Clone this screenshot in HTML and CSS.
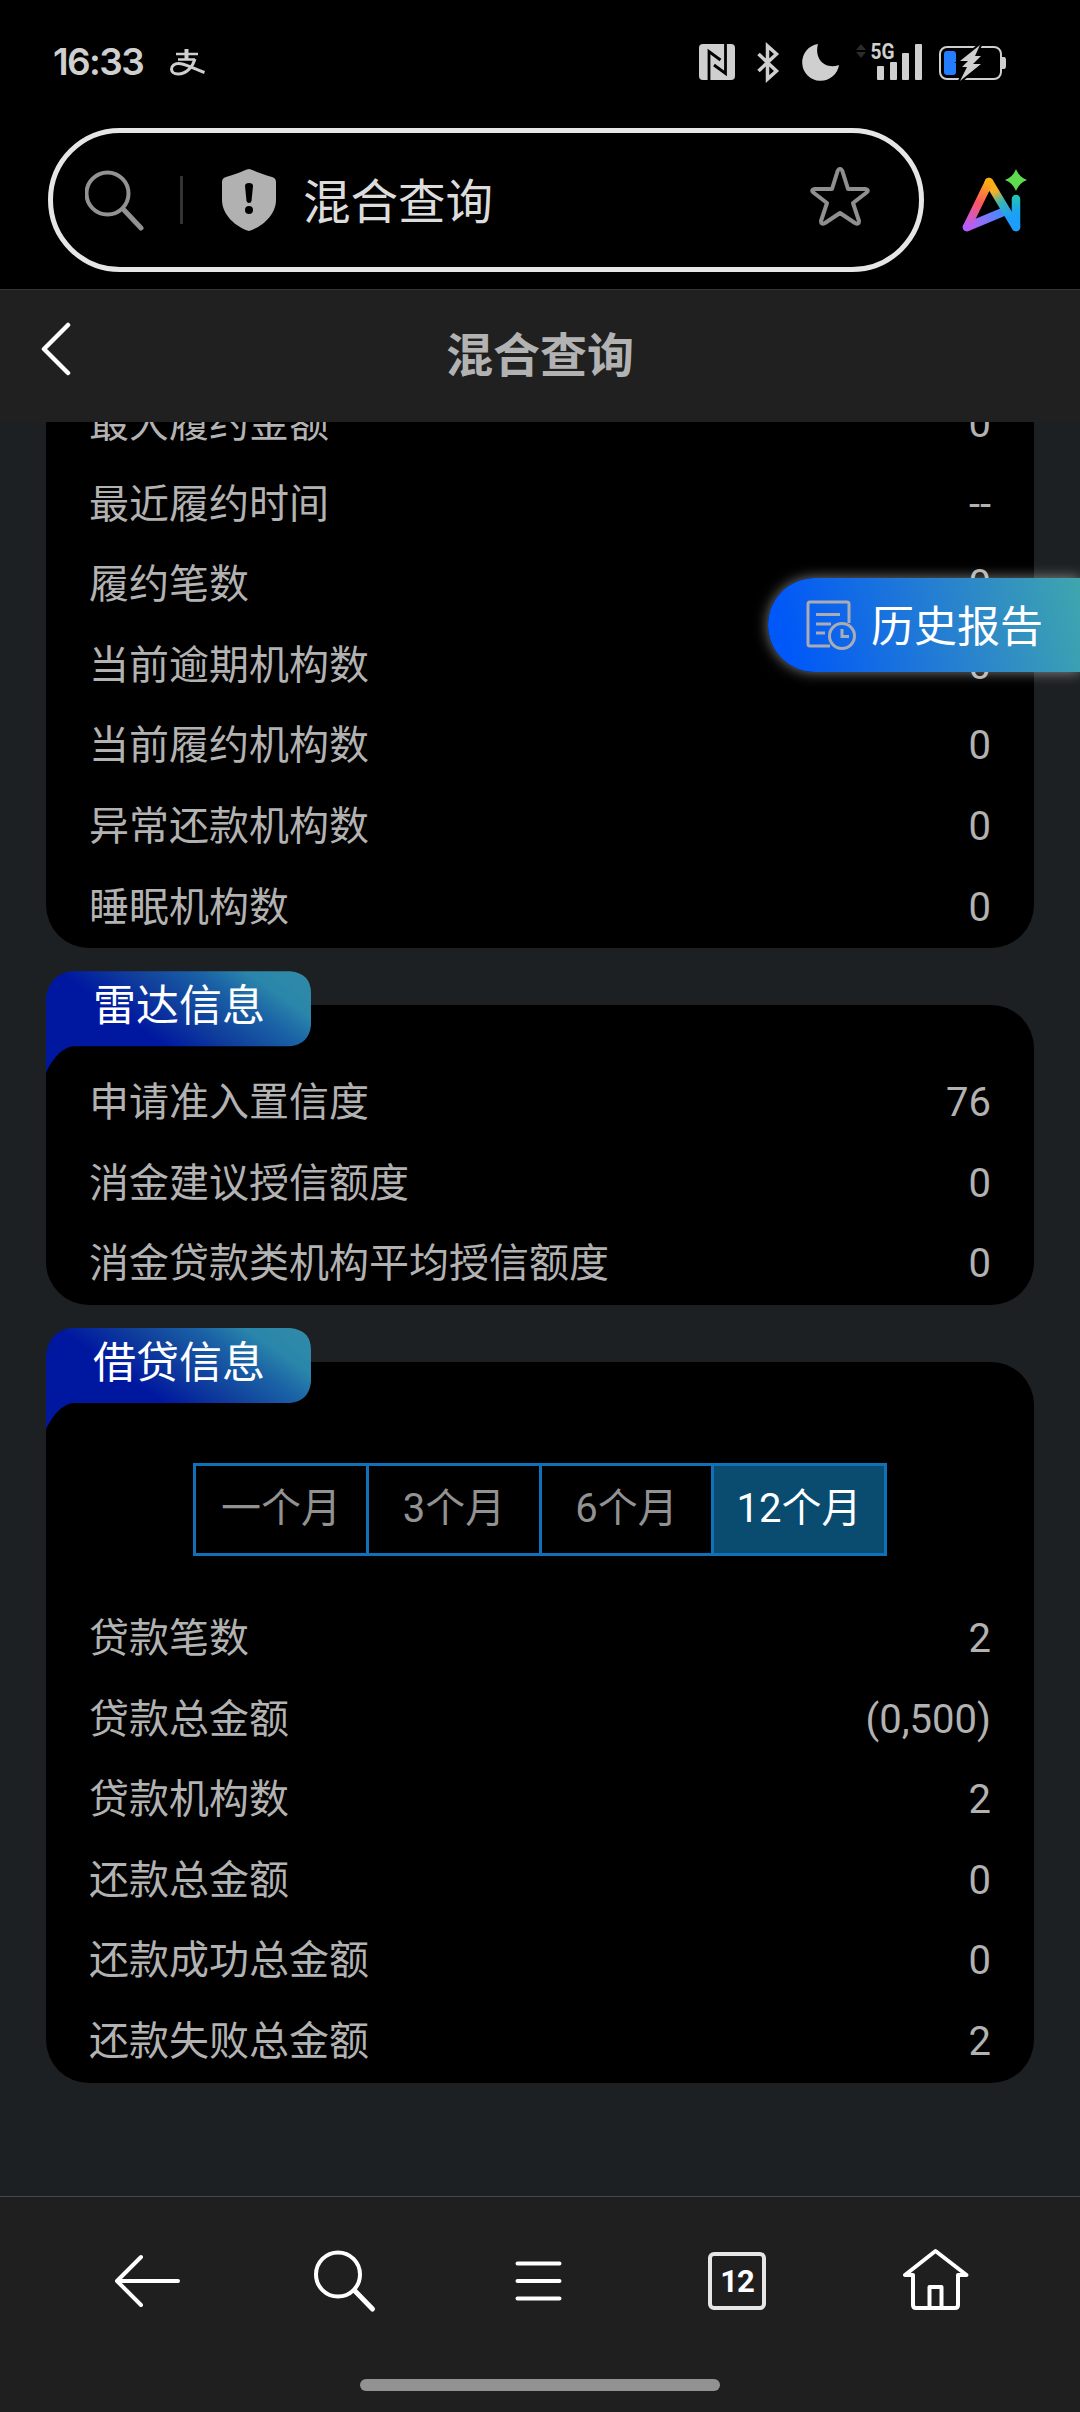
FILE: index.html
```html
<!DOCTYPE html>
<html lang="zh-CN">
  <head>
    <meta charset="UTF-8">
    <link rel="stylesheet" href="styles.css">
    <title>混合查询</title>
  </head>
  <body>
    <div class="phone">
      <div class="status">
        <span class="time">16:33</span>
        <svg class="pay" width="36" height="28" viewBox="0 0 36 28" fill="none" stroke="#cfcfcf">
          <path d="M6 6h22M8 11.500h17" stroke-width="2.400"/>
          <path d="M16.500 1v10" stroke-width="4"/>
          <path d="M25 11c-2 7-8 15-17 15-4 0-6.500-2-6.500-5 0-3 3-5.500 7-5.500 7 0 14 5 26 9" stroke-width="3"/>
        </svg>
        <svg class="status-icons" width="310" height="42" viewBox="698 41 310 42" fill="#cfcfcf">
          <rect x="699" y="44" width="36" height="36" rx="4"/>
          <path d="M709 80V51.500l11.500 8.500M725.500 44v29.500L714 65" fill="none" stroke="#000" stroke-width="2.800"/>
          <path d="M758.500 54l18 17-9 8V46l9 8-18 17" fill="none" stroke="#cfcfcf" stroke-width="3.500"/>
          <path d="M818 44a18.500 18.500 0 1 0 21 21c-14 5-25-6-21-21z"/>
          <path d="M861 44l5 6h-10zM861 58l5-6h-10z" fill="#2b2b2b"/>
          <text class="net" x="870.500" y="59" textLength="24" lengthAdjust="spacingAndGlyphs">5G</text>
          <rect x="877" y="66" width="7" height="14" rx="1"/>
          <rect x="890" y="62" width="7" height="18" rx="1"/>
          <rect x="902" y="53" width="7" height="27" rx="1"/>
          <rect x="915" y="44" width="7" height="36" rx="1"/>
          <rect x="940" y="47" width="61" height="32" rx="7" fill="none" stroke="#cfcfcf" stroke-width="2"/>
          <path d="M1002 57h2q2 0 2 3v6q0 3-2 3h-2z"/>
          <rect x="944" y="51" width="12" height="24" rx="3" fill="#247cff"/>
          <path d="M980 45L960 61h8l-6 6h5l-7 14 21-17h-8l8-8h-6z" stroke="#000" stroke-width="4"/>
          <path d="M980 45L960 61h8l-6 6h5l-7 14 21-17h-8l8-8h-6z"/>
        </svg>
      </div>

      <div class="search-row">
        <div class="search">
          <svg width="62" height="62" viewBox="0 0 62 62" fill="none" stroke="#929292" stroke-width="4" stroke-linecap="round">
            <circle cx="22.500" cy="24.500" r="21"/>
            <path d="M39 41l17 18" stroke-width="5"/>
          </svg>
          <i class="divider"></i>
          <svg width="54" height="62" viewBox="0 0 54 62">
            <path d="M27 0c2 0 12 5 23 8q4 1 4 5v18c0 15-14 27-27 31C14 58 0 46 0 31V13q0-4 4-5C15 5 25 0 27 0z" fill="#b1b1b1"/>
            <path d="M23 17q0-3 4-3t4 3l-1.500 15q-.5 2-2.500 2t-2.500-2z"/>
            <circle cx="27" cy="41" r="4"/>
          </svg>
          <span class="search-text">混合查询</span>
          <svg class="star" width="62" height="60" viewBox="0 0 62 60" fill="none" stroke="#8f8f8f" stroke-width="4" stroke-linejoin="round">
            <path d="M31 3q2 0 3 4l5 16h17q5 1 1 4L44 37l6 18q0 4-4 2L31 47 16 57q-4 2-4-2l6-18L5 27q-4-3 1-4h17l5-16q1-4 3-4z"/>
          </svg>
        </div>
        <svg class="ai" width="66" height="64" viewBox="962 168 66 64" fill="none" stroke-width="8.500" stroke-linecap="round" stroke-linejoin="round">
          <defs>
            <linearGradient id="left-leg" gradientUnits="userSpaceOnUse" x1="989" y1="183" x2="967" y2="227">
              <stop offset="0" stop-color="#ffae12"/>
              <stop offset=".45" stop-color="#ff5660"/>
              <stop offset="1" stop-color="#b45cff"/>
            </linearGradient>
            <linearGradient id="right-leg" gradientUnits="userSpaceOnUse" x1="989" y1="183" x2="1010" y2="218">
              <stop offset="0" stop-color="#ffae12"/>
              <stop offset=".25" stop-color="#f2b226"/>
              <stop offset=".55" stop-color="#3ab5b0"/>
              <stop offset="1" stop-color="#1c9dff"/>
            </linearGradient>
            <linearGradient id="bar" gradientUnits="userSpaceOnUse" x1="967" y1="227" x2="1004" y2="213">
              <stop offset="0" stop-color="#c35cf5"/>
              <stop offset="1" stop-color="#3d8dff"/>
            </linearGradient>
            <linearGradient id="stem" gradientUnits="userSpaceOnUse" x1="1016" y1="197" x2="1016" y2="227">
              <stop offset="0" stop-color="#22c3b4"/>
              <stop offset=".5" stop-color="#1aa2f2"/>
              <stop offset="1" stop-color="#1c9dff"/>
            </linearGradient>
          </defs>
          <path d="M967 227l36-15" stroke="url(#bar)"/>
          <path d="M989 182l27 45" stroke="url(#right-leg)"/>
          <path d="M989 182l-22 45" stroke="url(#left-leg)"/>
          <!-- a vertical line has no bounding box width, the gradient above is in user space -->
          <path d="M1016 199v28" stroke="url(#stem)"/>
          <path d="M1016 169q3 8 11 11-8 3-11 11-3-8-11-11 8-3 11-11z" fill="#5fdb50"/>
        </svg>
      </div>

      <div class="header">
        <svg class="back" width="32" height="54" viewBox="0 0 32 54" fill="none" stroke="#fff" stroke-width="4.500" stroke-linecap="round" stroke-linejoin="round">
          <path d="M28 3L4 27l24 24"/>
        </svg>
        <h1>混合查询</h1>
      </div>

      <div class="content">
        <div class="card first">
          <div class="row"><span>最大履约金额</span><span>0</span></div>
          <div class="row"><span>最近履约时间</span><span>--</span></div>
          <div class="row"><span>履约笔数</span><span>0</span></div>
          <div class="row"><span>当前逾期机构数</span><span>0</span></div>
          <div class="row"><span>当前履约机构数</span><span>0</span></div>
          <div class="row"><span>异常还款机构数</span><span>0</span></div>
          <div class="row"><span>睡眠机构数</span><span>0</span></div>
        </div>

        <div class="card">
          <div class="tag">雷达信息</div>
          <div class="row"><span>申请准入置信度</span><span>76</span></div>
          <div class="row"><span>消金建议授信额度</span><span>0</span></div>
          <div class="row"><span>消金贷款类机构平均授信额度</span><span>0</span></div>
        </div>

        <div class="card">
          <div class="tag">借贷信息</div>
          <div class="months">
            <span>一个月</span>
            <span>3个月</span>
            <span>6个月</span>
            <span class="active">12个月</span>
          </div>
          <div class="row"><span>贷款笔数</span><span>2</span></div>
          <div class="row"><span>贷款总金额</span><span>(0,500)</span></div>
          <div class="row"><span>贷款机构数</span><span>2</span></div>
          <div class="row"><span>还款总金额</span><span>0</span></div>
          <div class="row"><span>还款成功总金额</span><span>0</span></div>
          <div class="row"><span>还款失败总金额</span><span>2</span></div>
        </div>

        <div class="history">
          <svg width="50" height="50" viewBox="0 0 50 50" fill="none" stroke="#a9acb4" stroke-width="3">
            <path d="M43 23V4q0-2-2-2H4Q2 2 2 4v40q0 2 2 2h20M10 14.500h24M10 24h15M10 33h9"/>
            <circle cx="36" cy="36" r="12.500"/>
            <path d="M36 29v7.500h7"/>
          </svg>
          <span>历史报告</span>
        </div>
      </div>

      <div class="nav">
        <div class="nav-icons">
          <svg width="66" height="66" viewBox="115 2248 66 66">
            <path d="M141 2257l-24 24 24 24M118 2281h60"/>
          </svg>
          <svg width="66" height="66" viewBox="312 2248 66 66">
            <circle cx="338" cy="2274.500" r="22"/>
            <path d="M355 2291l17.500 18" stroke-width="5"/>
          </svg>
          <svg width="66" height="66" viewBox="508.500 2248 66 66">
            <path d="M517 2263.500h42M517 2281h42M517 2298.500h42"/>
          </svg>
          <div class="pages">12</div>
          <svg width="66" height="66" viewBox="903 2248 66 66">
            <path d="M913 2275v30q0 3 3 3h39q3 0 3-3v-30h8.500L935.500 2251 905 2275zM929.500 2308v-21h12v21"/>
          </svg>
        </div>
        <div class="gesture"></div>
      </div>
    </div>
  </body>
</html>
```
FILE: styles.css
```css
body {
    margin: 0;
    background-color: #000;
    font-family: Roboto, "Noto Sans CJK SC", sans-serif;
}

svg {
    display: block;
    flex: none;
}

.phone {
    display: flex;
    flex-direction: column;
    width: 1080px;
    height: 2412px;
    overflow: hidden;
}

.status {
    display: flex;
    align-items: center;
    height: 124px;
    box-sizing: border-box;
    padding: 0 72px 0 53px;
}

.time {
    width: 117px;
    padding-bottom: 1px;
    font-family: Inter, sans-serif;
    font-size: 37px;
    font-weight: 600;
    letter-spacing: -1.6px;
    color: #cfcfcf;
}

.status-icons {
    margin-left: auto;
}

.net {
    font-size: 22px;
    font-weight: 700;
}

.search-row {
    display: flex;
    align-items: center;
    height: 165px;
    box-sizing: border-box;
    padding: 4px 52px 17px 48px;
}

.search {
    display: flex;
    align-items: center;
    width: 876px;
    height: 144px;
    box-sizing: border-box;
    padding: 0 48px 0 32px;
    border: 5px solid #e6e6e6;
    border-radius: 72px;
}

.divider {
    width: 3px;
    height: 48px;
    margin: 0 39px 0 33px;
    background-color: #333;
}

.search-text {
    padding-top: 5px;
    margin-left: 27px;
    font-size: 47.5px;
    line-height: 60px;
    color: #dcdcdc;
}

.star {
    margin: 0 0 8px auto;
}

.ai {
    margin-left: auto;
}

.header {
    display: grid;
    grid-template-columns: 80px 1fr 80px;
    align-items: center;
    height: 133px;
    box-sizing: border-box;
    border-top: 1px solid #363636;
    background-color: #202020;
}

.back {
    margin: 0 0 14px 40px;
}

h1 {
    margin: 0;
    font-size: 47px;
    font-weight: 700;
    line-height: 60px;
    text-align: center;
    color: #b2b2b2;
}

.content {
    position: relative;
    flex: 1;
    overflow: hidden;
    padding: 0 46px;
    background-color: #1d2023;
}

.card {
    position: relative;
    box-sizing: border-box;
    margin-bottom: 57px;
    padding: 58px 43px 0;
    border-radius: 43px;
    background-color: #000;
}

/* list is scrolled, the first row sits half under the header */
.card.first {
    margin-top: -38px;
    padding-top: 0;
    border-radius: 0 0 43px 43px;
}

.row {
    display: flex;
    justify-content: space-between;
    height: 80.6px;
    font-size: 40px;
    line-height: 80.6px;
    color: #b2b2b2;
}

.tag {
    position: absolute;
    top: -34px;
    left: 0;
    width: 265px;
    height: 101px;
    box-sizing: border-box;
    padding-left: 47px;
    font-size: 43px;
    line-height: 71px;
    color: #fff;
    background: linear-gradient(35deg, #0018a0 38%, #10409c 56%, #1a62a6 72%, #2a86aa 84%, #318ba8);
    clip-path: path("M0 101V26Q4 2 26 0H244Q265 2 265 22V54Q263 73 244 75H27Q12 77 0 101Z");
}

.months {
    display: grid;
    grid-template-columns: 170px 173px 172px 1fr;
    width: 694px;
    height: 93px;
    box-sizing: border-box;
    margin: 43px auto;
    border: 3px solid #1070b8;
    font-size: 40px;
    line-height: 86px;
    text-align: center;
    color: #929292;
}

.months span + span {
    border-left: 3px solid #1070b8;
}

.months .active {
    color: #fff;
    background-color: #0a4b70;
}

.history {
    position: absolute;
    top: 156px;
    right: 0;
    display: flex;
    align-items: center;
    width: 312px;
    height: 94px;
    box-sizing: border-box;
    padding-left: 38px;
    border-radius: 47px 0 0 47px;
    font-size: 43px;
    color: #fff;
    background: linear-gradient(75deg, #0058f8 8%, #2a84cc 62%, #3fa6ae);
    box-shadow: 0 0 14px rgba(255, 255, 255, 0.5);
}

.history span {
    padding-bottom: 5px;
    margin-left: 15px;
}

.nav {
    height: 216px;
    box-sizing: border-box;
    border-top: 1px solid #484848;
    background-color: #1f1f1f;
}

.nav-icons {
    display: grid;
    grid-template-columns: repeat(5, 197px);
    justify-items: center;
    align-items: center;
    height: 66px;
    padding: 51px 0 0 49px;
}

.nav-icons svg {
    fill: none;
    stroke: #fff;
    stroke-width: 4;
    stroke-linecap: round;
    stroke-linejoin: round;
}

.pages {
    width: 58px;
    height: 58px;
    box-sizing: border-box;
    margin-right: 3px;
    border: 4px solid #e6e6e6;
    border-radius: 6px;
    font-size: 31px;
    font-weight: 700;
    line-height: 52px;
    letter-spacing: -1px;
    text-align: center;
    color: #fff;
}

.gesture {
    width: 360px;
    height: 12px;
    margin: 65px auto 0;
    border-radius: 6px;
    background-color: #929292;
}
```
